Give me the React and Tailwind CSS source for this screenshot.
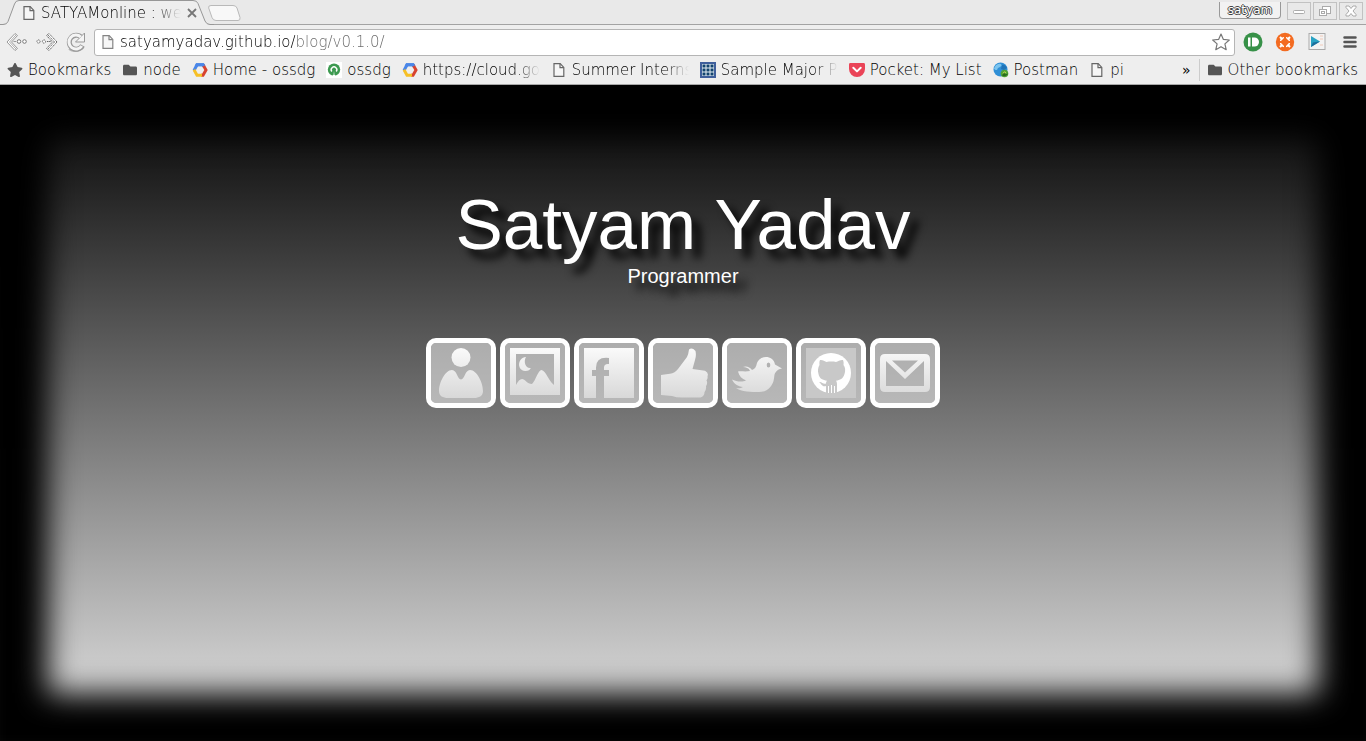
import { FaStar, FaFolder } from "react-icons/fa";

function PageIcon({ className = "" }) {
  return (
    <svg viewBox="0 0 16 16" className={`h-4 w-4 shrink-0 ${className}`} fill="#f6f6f6" stroke="#666" strokeWidth="1.2">
      <path d="M3 1.6h6.2l3.6 3.8v9H3z" />
      <path d="M9 1.8v3.9h3.6" fill="none" />
    </svg>
  );
}

function CloudIcon() {
  return (
    <svg viewBox="0 0 16 16" className="h-4 w-4 shrink-0" fill="none" strokeWidth="3">
      <path d="M2 8.500 5 2.700h6l1.200 2" stroke="#4a86e8" />
      <path d="M11 2.700 14 8 11 13.300H9" stroke="#d7432f" />
      <path d="M2 7.800 5 13.300h5" stroke="#f6c026" />
      <path d="M4 4.700 5 2.700h6l.8 1.400" stroke="#4a86e8" />
    </svg>
  );
}

function OssdgIcon() {
  return (
    <svg viewBox="0 0 16 16" className="h-4 w-4 shrink-0">
      <rect width="16" height="16" fill="#fff" />
      <circle cx="8" cy="7.600" r="6.200" fill="#3d9a50" />
      <path d="M8 9 6.500 15h3z" fill="#fff" />
      <path d="M5.800 9.500a2.800 2.800 0 1 1 4.400 0" fill="none" stroke="#fff" strokeWidth="1.400" />
      <path d="M8 7v6" stroke="#3d9a50" />
    </svg>
  );
}

function GridIcon() {
  return (
    <svg viewBox="0 0 16 16" className="h-4 w-4 shrink-0">
      <rect width="16" height="16" fill="#3f5f9c" />
      <rect x="2" y="2" width="12" height="12" fill="#e6eef5" />
      {[3, 7, 11].map((y) =>
        [3, 7, 11].map((x) => <rect key={`${x}-${y}`} x={x - 0.5} y={y - 0.5} width="3" height="3" fill="#12446e" />)
      )}
    </svg>
  );
}

function PocketIcon() {
  return (
    <svg viewBox="0 0 16 16" className="h-4 w-4 shrink-0">
      <path d="M1.4 1h13.2A1.4 1.4 0 0 1 16 2.4V7a8 8 0 0 1-16 0V2.4A1.4 1.4 0 0 1 1.4 1z" fill="#ea4458" />
      <path d="m4.3 5.8 3.7 3.6 3.7-3.6" fill="none" stroke="#fff" strokeWidth="2" strokeLinecap="round" strokeLinejoin="round" />
    </svg>
  );
}

function PostmanIcon() {
  return (
    <svg viewBox="0 0 16 16" className="h-4 w-4 shrink-0">
      <circle cx="7.500" cy="7.500" r="7" fill="#2f8fd6" />
      <path d="M2 4.500c2-3.500 6-3.500 6.500-1.500S5 5 4.500 7 2 8 1 6.500z" fill="#7cc4ee" />
      <path d="M9 3c2-1 4 1 5 3l-3 2-3-1z" fill="#1f74b8" />
      <circle cx="11.500" cy="11.500" r="3.800" fill="#4fa335" />
      <path d="M9 13.500c2 1.500 5 .5 6-2l-3 .8-1-2z" fill="#2b6b1d" />
      <path d="m9.800 11.300 2-1.500 1.400 1.200" stroke="#c7dd55" fill="none" />
    </svg>
  );
}

const StarBookmark = () => <FaStar className="h-4 w-4 shrink-0 text-[#555]" />;
const FolderIcon = () => <FaFolder className="h-[14px] w-4 shrink-0 text-[#555]" />;

const BOOKMARKS = [
  { label: "Bookmarks", Icon: StarBookmark },
  { label: "node", Icon: FolderIcon },
  { label: "Home - ossdg", Icon: CloudIcon },
  { label: "ossdg", Icon: OssdgIcon },
  { label: "https://cloud.goo", Icon: CloudIcon, long: true },
  { label: "Summer Interns", Icon: PageIcon, long: true },
  { label: "Sample Major Pr", Icon: GridIcon, long: true },
  { label: "Pocket: My List", Icon: PocketIcon },
  { label: "Postman", Icon: PostmanIcon },
  { label: "pi", Icon: PageIcon },
];

function TabStrip() {
  return (
    <header className="flex h-[25px] justify-between border-b border-[#a3a3a3] bg-[#e9e9e9]">
      <div className="flex">
        <div className="relative -mb-px flex w-[208px] items-center pl-[21px]">
          <svg viewBox="0 0 214 25" className="absolute top-0 left-0 h-[25px] w-[214px]">
            <path d="M0 24.500h3q4 0 5-3L14.500 4Q15.500.500 19 .500h174q4 0 5 3l7 17.500q1.500 3.500 5 3.500h4V26H0z" fill="#eee" />
            <path d="M0 24.500h3q4 0 5-3L14.500 4Q15.500.500 19 .500h174q4 0 5 3l7 17.500q1.500 3.500 5 3.500h4" fill="none" stroke="#979797" />
          </svg>
          <PageIcon className="relative" />
          <span className="relative ml-1 w-[140px] overflow-hidden text-[15px] leading-[26px] font-extralight whitespace-nowrap [mask-image:linear-gradient(to_right,#000_112px,transparent)]">
            SATYAMonline : we
          </span>
          <button aria-label="Close tab" className="relative ml-[6px] shrink-0">
            <svg viewBox="0 0 10 10" className="h-[10px] w-[10px]" stroke="#777" strokeWidth="1.800">
              <path d="m1 1 8 8M9 1 1 9" />
            </svg>
          </button>
        </div>
        <button aria-label="New tab" className="flex items-center pt-px">
          <svg viewBox="0 0 34 16" className="h-4 w-[34px]" fill="#f8f8f8" stroke="#b9b9b9">
            <path d="M3 .5h22q3 0 4 2.500l3 9.500q.5 3-2 3H8q-3 0-4-3L.7 3Q0 .5 3 .5z" />
          </svg>
        </button>
      </div>
      <div className="flex items-start gap-[2px] pt-[2px] pr-[3px]">
        <button className="mr-1 h-[17px] w-[62px] rounded-b-[4px] border border-t-0 border-[#999] bg-[#f2f2f2] text-center text-[12px] leading-[17px] text-white [text-shadow:1px_0_0_#444,-1px_0_0_#444,0_1px_0_#444,0_-1px_0_#444]">
          satyam
        </button>
        <button aria-label="Minimize" className="flex h-[18px] w-6 items-center justify-center border border-[#c2c2c2]">
          <svg viewBox="0 0 12 12" className="h-3 w-3" fill="#fff" stroke="#aaa"><rect x=".5" y="5.500" width="11" height="3" rx="1" /></svg>
        </button>
        <button aria-label="Restore" className="flex h-[18px] w-6 items-center justify-center border border-[#c2c2c2]">
          <svg viewBox="0 0 12 12" className="h-3 w-3" fill="#fff" stroke="#aaa">
            <rect x="3.500" y="1.500" width="8" height="7" /><rect x=".5" y="4.500" width="7" height="6" /><rect x="2.500" y="6.500" width="3" height="2" />
          </svg>
        </button>
        <button aria-label="Close window" className="flex h-[18px] w-6 items-center justify-center border border-[#c2c2c2]">
          <svg viewBox="0 0 12 12" className="h-3 w-3" fill="#fff" stroke="#aaa">
            <path d="M1 1h3l2 2.500L8 1h3v1.500L8 6l3 3.500V11H8L6 8.500 4 11H1V9.500L4 6 1 2.500z" />
          </svg>
        </button>
      </div>
    </header>
  );
}

function Toolbar() {
  return (
    <nav className="flex h-[31px] items-center bg-[#eee] pt-[3px] pr-[9px] pl-[6px]">
      <button aria-label="Back" className="mr-2">
        <svg viewBox="0 0 22 20" className="h-5 w-[22px]" fill="#fff" stroke="#999">
          <path d="M1 10 9 1.500l2.500 2L5.500 10l6 6.500-2.500 2z" />
          <path d="M3.500 10 10 3M3.500 10l6.500 7" stroke="#aaa" />
          <circle cx="13" cy="9.500" r="1.800" stroke="#777" /><circle cx="18.500" cy="9.500" r="1.800" stroke="#777" />
          <path d="M7.500 9.500h2.500" />
        </svg>
      </button>
      <button aria-label="Forward" className="mr-[7px]">
        <svg viewBox="0 0 22 20" className="h-5 w-[22px]" fill="#fff" stroke="#666" strokeDasharray="1.500 .6">
          <path d="m21 10-8-8.500-2.500 2 6 6.500-6 6.500 2.500 2z" />
          <path d="m18.500 10-6.500-7M18.500 10 12 17" />
          <circle cx="2.500" cy="9.500" r="1.600" /><circle cx="8" cy="9.500" r="1.600" />
          <path d="M11 9.500h4" />
        </svg>
      </button>
      <button aria-label="Reload" className="mr-[7px]">
        <svg viewBox="0 0 22 20" className="h-5 w-[22px]" fill="none">
          <path d="M4 17q6 4.500 14-1" stroke="#b5b5b5" strokeWidth="2" />
          <path d="M17.500 13.500a7 7 0 1 1-1-8" stroke="#999" strokeWidth="5" />
          <path d="M19.500 1v9h-9l3-3 3-3z" fill="#f4f4f4" stroke="#999" />
          <path d="M16.800 14a7 7 0 1 1-1-9" stroke="#f4f4f4" strokeWidth="3" />
        </svg>
      </button>
      <div className="flex h-[27px] flex-1 items-center rounded-[3px] border border-[#b5b5b5] bg-white pr-1 pl-[5px]">
        <PageIcon className="opacity-80" />
        <input
          aria-label="Address"
          defaultValue="satyamyadav.github.io/blog/v0.1.0/"
          className="ml-1 min-w-0 flex-1 bg-[linear-gradient(to_right,#000_175px,#666_175px)] bg-clip-text text-[15px] font-extralight text-transparent outline-none"
        />
        <button aria-label="Bookmark this page">
          <svg viewBox="0 0 18 18" className="h-[18px] w-[18px]" fill="#fff" stroke="#777" strokeWidth="1.200" strokeLinejoin="round">
            <path d="m9 1 2.400 5.400 5.900.6-4.400 3.900 1.300 5.800L9 13.700l-5.200 3 1.300-5.800L.7 7l5.900-.6z" />
          </svg>
        </button>
      </div>
      <button aria-label="Pushbullet" className="ml-2">
        <svg viewBox="0 0 20 20" className="h-5 w-5">
          <circle cx="10" cy="10" r="9.500" fill="#379148" />
          <rect x="5" y="5.500" width="2.500" height="9" fill="#fff" />
          <path d="M9 5.500h2.500a4.500 4.500 0 0 1 0 9H9z" fill="#fff" />
        </svg>
      </button>
      <button aria-label="Extension" className="ml-3">
        <svg viewBox="0 0 20 20" className="h-5 w-5">
          <circle cx="10" cy="10" r="9.200" fill="#f36b21" />
          <circle cx="10" cy="10" r="4.500" fill="none" stroke="#fff" strokeWidth="1.600" />
          <path d="M10 3v4m0 6v4M3 10h4m6 0h4" stroke="#f36b21" strokeWidth="2" />
          <path d="m5 5 2.500 2.500m5 5L15 15M15 5l-2.500 2.500m-5 5L5 15" stroke="#fff" strokeWidth="2" />
        </svg>
      </button>
      <button aria-label="Player" className="ml-3">
        <svg viewBox="0 0 20 20" className="h-5 w-5">
          <rect x="2" y="1.500" width="16" height="16" fill="#f3f3f3" stroke="#aaa" />
          <path d="M13 4h3M13 7h3M13 13h3" stroke="#f0c9b8" />
          <path d="m4 4 9 5.500L4 15z" fill="#2aa3c4" />
          <path d="m4 15 9-5.500-7 1z" fill="#1c6e9c" />
        </svg>
      </button>
      <button aria-label="Menu" className="ml-4">
        <svg viewBox="0 0 14 14" className="h-[14px] w-[14px]" stroke="#555" strokeWidth="2.500" strokeLinecap="round">
          <path d="M1.500 2.500h11M1.500 7h11M1.500 11.500h11" />
        </svg>
      </button>
    </nav>
  );
}

function BookmarksBar() {
  return (
    <nav className="flex h-[29px] items-center justify-between border-b border-[#a8a8a8] bg-[#eee] pr-2 pl-[7px] text-[15px] font-extralight whitespace-nowrap">
      <div className="flex gap-[11px]">
        {BOOKMARKS.map(({ label, Icon, long }) => (
          <a key={label} href="#" className="flex items-center gap-[5px]">
            <Icon />
            <span className={long ? "w-[117px] overflow-hidden [mask-image:linear-gradient(to_right,#000_92px,transparent)]" : ""}>{label}</span>
          </a>
        ))}
      </div>
      <div className="flex items-center">
        <button aria-label="More bookmarks" className="mr-2 text-[14px] font-normal">»</button>
        <a href="#" className="flex items-center gap-[5px] border-l border-[#ccc] pl-[7px]">
          <FolderIcon />
          Other bookmarks
        </a>
      </div>
    </nav>
  );
}

const SHAPES = {
  About: (
    <>
      <circle cx="25" cy="9.500" r="9.500" />
      <path d="M16 22C21 22 21 31 25 31.500 29 31 29 22 34 22c7 0 13 13 13 21 0 5-4 7-9 7H12c-5 0-9-2-9-7 0-8 6-21 13-21z" />
    </>
  ),
  Gallery: (
    <path
      fillRule="evenodd"
      d="M0 0h50v47H0zM6 6v31c2-4 4-6 6-6 3 0 5 5 10 5 4-4 6-14 9.500-14C36 23 38 32 44 37V6zM16 9C7 10 7 22.500 15 23c3 .2 5-1 5.800-3C16 21 13 14 16 9z"
    />
  ),
  Facebook: (
    <path
      fillRule="evenodd"
      d="M0 0h50v50H20V28h5v-6h-5v-2.500q0-4 5-3.500v-6q-13-1.500-13 9.500V22H8v6h4v22H0z"
    />
  ),
  Like: (
    <path d="M3 27 12 25.700Q17 25 20 21l9-12q1.500-3 2-7.500Q34-1 37.500 3q1 5-.5 9l-2.500 9 12.500 1.700q4 2 2.500 5.500.5 2.500-1 4 1.500 3-.5 6 .5 3-1.500 6 0 4-4 5.300H24Q18 49.500 14 48L3 47z" />
  ),
  Twitter: (
    <path
      fillRule="evenodd"
      d="M50 20.500 43 16.500C42 11 38 9 34 9c-5 0-8 3-9 6-1 4-2 6-5 7-2-3-6-4.500-9-3 3 0 6 1 7 4-4 1-9 0-12 .5 1 4.500 4 7.500 8 9-4 2-10 1-14-1 2 4.500 6 7 11 7.500-2 1.500-5 1.500-7 1 5 4 16 4 23 4 9 0 13-6 14.500-11 1-3 .5-7 2-8.500 1.500-2.500 3.500-3.500 6.500-4zM36.500 14.500a1.800 2.500 0 1 1 0 5 1.800 2.500 0 1 1 0-5z"
    />
  ),
  GitHub: (
    <>
      <path fill="#c8c8c8" d="M0 0h50v50H0z" />
      <circle cx="25" cy="25" r="20" fill="#fff" />
      <path
        fill="#c8c8c8"
        d="M14 12c2-.5 5 1 6.500 2 3-.6 7-.6 9.500 0 2-1 5-2.500 7-2 1 2.500.5 4 .5 5 2 2.500 2 6 1 9-1.500 5-4.500 6-8.500 6.700 1 1.300 1 3.300 1 4.300v9H20v-8c-4 1.500-4.500-2.500-7-4 3-.5 4 2.500 7 1.500 0-1.500.5-2 1-2.800-4-.7-7.500-1.700-8.500-6.700-1-3.500-.5-6.500 1-9 0-1-.5-3 .5-5z"
      />
      <path d="M22.500 38v7M25.500 37v8M28.500 38v7" stroke="#fff" fill="none" />
    </>
  ),
  Mail: (
    <path
      fillRule="evenodd"
      d="M5 6h40q5 0 5 5v28q0 5-5 5H5q-5 0-5-5V11q0-5 5-5zM6 13v25h38V13L25 31zM12 12.500l13 12 13-12z"
    />
  ),
};

function ShapeIcon({ name }) {
  const id = `fade-${name}`;
  return (
    <svg viewBox="0 0 50 50" className="h-[50px] w-[50px]">
      <defs>
        <linearGradient id={id} gradientUnits="userSpaceOnUse" x1="0" y1="0" x2="0" y2="50">
          <stop offset="0" stopColor="#fafafa" />
          <stop offset="1" stopColor="#d8d8d8" />
        </linearGradient>
      </defs>
      <g fill={`url(#${id})`}>{SHAPES[name]}</g>
    </svg>
  );
}

export default function App() {
  return (
    <div className="flex min-h-screen flex-col font-['DejaVu_Sans',sans-serif] text-black">
      <TabStrip />
      <Toolbar />
      <BookmarksBar />
      <main className="flex flex-1 flex-col items-center bg-[linear-gradient(#000,#e6e6e6)] pt-[100px] font-['Liberation_Sans',Arial,sans-serif] text-white shadow-[inset_0_0_30px_48px_#000]">
        <h1 className="text-[71px] leading-[80px] [text-shadow:9px_9px_9px_#000]">Satyam Yadav</h1>
        <p className="text-[20px] leading-[23px] [text-shadow:9px_9px_9px_#000]">Programmer</p>
        <div className="mt-[50px] flex gap-1">
          {Object.keys(SHAPES).map((name) => (
            <a key={name} href="#" aria-label={name} className="rounded-[10px] border-5 border-white bg-white/50 bg-clip-padding p-[5px]">
              <ShapeIcon name={name} />
            </a>
          ))}
        </div>
      </main>
    </div>
  );
}
